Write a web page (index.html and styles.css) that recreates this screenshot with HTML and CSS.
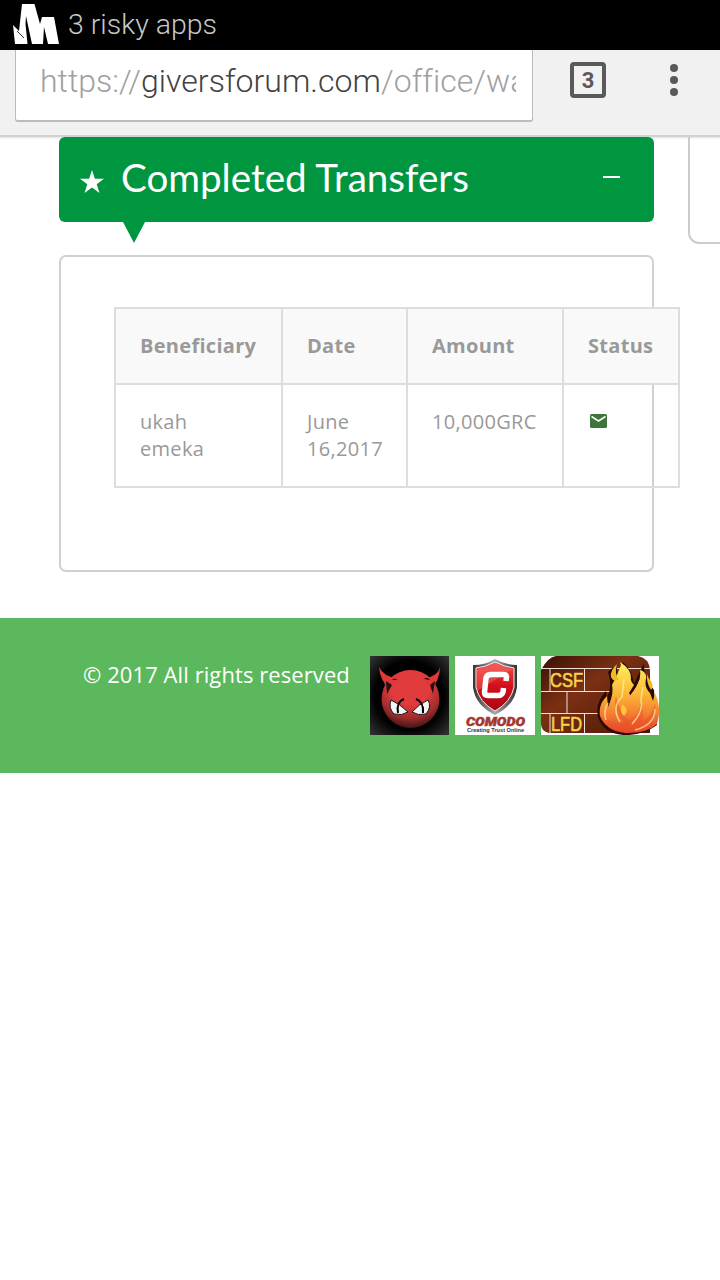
FILE: index.html
```html
<!DOCTYPE html>
<html lang="en">
<head>
<meta charset="utf-8">
<title>Completed Transfers</title>
<link rel="stylesheet" href="styles.css">
</head>
<body>
<div class="status-bar">
  <svg class="status-icon" width="47" height="41" viewBox="0 0 47 41"><path fill="#fff" d="M0 21L6 27 9 0H21.500L27 20 29 13H41L46 40H35L31 23 30 40H19L13 12 12.500 20 14.500 40H2Z"/><path fill="none" stroke="#000" stroke-width=".8" d="M4 27L11 34"/></svg>
  <span class="status-text">3 risky apps</span>
</div>
<header class="toolbar">
  <div class="address"><div class="url">https://<span class="host">giversforum.com</span>/office/wallet</div></div>
  <div class="tabs">3</div>
  <div class="menu"><i></i><i></i><i></i></div>
</header>
<main class="content">
  <div class="column">
    <div class="title-bar">
      <svg class="star" width="24" height="24" viewBox="0 0 24 24"><path fill="#fff" d="M12 0l2.900 8.700H24l-7.300 5.500L19.500 23 12 17.600 4.500 23l2.800-8.800L0 8.700h9.100z"/></svg>
      <h1 class="title">Completed Transfers</h1>
      <span class="collapse"></span>
    </div>
    <div class="pointer"></div>
    <section class="panel">
      <table class="transfers">
        <colgroup><col class="c1"><col class="c2"><col class="c3"><col class="c4"></colgroup>
        <thead><tr><th>Beneficiary</th><th>Date</th><th>Amount</th><th>Status</th></tr></thead>
        <tbody><tr><td>ukah<br>emeka</td><td>June<br>16,2017</td><td>10,000GRC</td><td><svg class="mail" width="17" height="14" viewBox="0 0 17 14"><rect width="17" height="14" rx="1.500" fill="#3c763d"/><path d="M1.500 2.500L8.500 7l7-4.500" fill="none" stroke="#fff" stroke-width="1.600"/></svg></td></tr></tbody>
      </table>
    </section>
  </div>
  <aside class="next-panel"></aside>
</main>
<footer class="footer">
  <span class="copyright">© 2017 All rights reserved</span>
  <div class="badges">
    <svg width="79" height="79" viewBox="0 0 79 79">
      <defs>
        <radialGradient id="dark" r=".72"><stop offset=".6" stop-color="#000"/><stop offset="1" stop-color="#393939"/></radialGradient>
        <radialGradient id="face" cx=".5" cy=".25" r=".77"><stop offset=".45" stop-color="#e23b3c"/><stop offset=".75" stop-color="#a02c2c"/><stop offset="1" stop-color="#391313"/></radialGradient>
      </defs>
      <rect width="79" height="79" fill="url(#dark)"/>
      <path fill="#2b2b2b" d="M13 22L16 38 24 29ZM66 21L64 38 56 29Z"/>
      <circle cx="40.500" cy="43" r="29" fill="url(#face)"/>
      <path fill="#e23738" d="M9 11Q13 20 28 23L21 33Q10 26 9 11ZM70 10Q69 20 53 23L60 33Q70 26 70 10Z"/>
      <path fill="#211" d="M16 25L22 29 17 38ZM65 25L60 29 63 38ZM22 24q3-3 5 0zM54 23q3-3 6 1z"/>
      <path fill="#f4f4f4" stroke="#171313" d="M21 44Q30 48 38 56 32 60 24 58 18 52 21 44ZM58 44Q49 48 42 56 48 60 56 58 62 51 58 44Z"/>
      <path fill="none" stroke="#000" stroke-width="2" d="M34 43Q26 46 28 57M46 43Q54 46 53 57"/>
    </svg>
    <svg width="80" height="79" viewBox="0 0 80 79">
      <defs>
        <linearGradient id="shield" x2="0" y2="1"><stop stop-color="#f24d4c"/><stop offset=".5" stop-color="#d20f18"/><stop offset="1" stop-color="#a70912"/></linearGradient>
        <linearGradient id="steel"><stop stop-color="#333"/><stop offset=".5" stop-color="#aaa"/><stop offset="1" stop-color="#303030"/></linearGradient>
      </defs>
      <rect width="80" height="79" fill="#fff"/>
      <path fill="url(#steel)" d="M40 3Q50 9 62 9V31Q60 49 40 59 20 49 18 31V9Q31 9 40 3Z"/>
      <path fill="url(#shield)" stroke="#eee" stroke-width="1" d="M40 6Q50 11 59 12V31Q56 46 40 55 24 46 21 31V12Q31 11 40 6Z"/>
      <path fill="#fa7770" opacity=".4" d="M22 13Q32 12 40 7 49 12 58 13L22 35Z"/>
      <path fill="none" stroke="#fff" stroke-width="5.500" stroke-linejoin="round" d="M51 25L51.500 21Q51.500 18.500 48 18.500H36Q32 18.500 31 22L29.500 36Q29.500 39.500 33 39.500H43Q47 39.500 48 36L48.500 32"/>
      <text class="comodo" x="11" y="70" textLength="59" lengthAdjust="spacingAndGlyphs">COMODO</text>
      <text class="tagline" x="12" y="75.500" textLength="57" lengthAdjust="spacingAndGlyphs">Creating Trust Online</text>
    </svg>
    <svg width="118" height="79" viewBox="0 0 118 79">
      <defs>
        <linearGradient id="brick" y2="1"><stop stop-color="#3a1005"/><stop offset=".4" stop-color="#7b3013"/><stop offset="1" stop-color="#4b1706"/></linearGradient>
        <linearGradient id="fire" x2="0" y2="1"><stop stop-color="#fff263"/><stop offset=".45" stop-color="#fcb735"/><stop offset=".75" stop-color="#f37a31"/><stop offset="1" stop-color="#df3d25"/></linearGradient>
      </defs>
      <rect width="118" height="79" fill="#fff"/>
      <path fill="url(#brick)" d="M15 0H97Q108 2 109 14V77H8Q0 75 0 68V14Q7 1 15 0Z"/>
      <path fill="none" stroke="#ede1dc" d="M0 12.500H109M0 35.500H84M0 57.500H70M9 12V35M43.500 12V35M26 35V57M9 57V77M43.500 57V77"/>
      <path fill="#2b0903" d="M57 61Q54 47 65 35L66 42Q72 30 67 16 71 12 76 8 75 17 79 22L82 6Q91 14 93 28L103 7Q102 21 113 34L116 69Q101 80 82 79 62 77 57 61Z"/>
      <path fill="url(#fire)" d="M59 60Q57 48 66 40L67 51Q73 38 71 29 76 20 80 9L79 6Q90 13 90 22 89 25 93 29L88 37Q91 40 86 43 94 34 97 27 100 22 99 14 106 16 105 23 103 31 109 37L112 45 114 37Q121 51 116 68 105 78 84 77 65 75 59 60Z"/>
      <path fill="#f1ba21" d="M76 8Q73 19 78 23 73 27 70 21 69 14 76 8ZM106 17Q105 27 110 34 113 31 110 25 106 21 106 17Z"/>
      <path fill="#ec542b" opacity=".55" d="M63 59Q69 74 83 66 71 53 75 40 80 61 89 64 98 60 101 43 101 58 103 65 111 59 114 48 116 64 107 72 86 81 70 71Z"/>
      <path fill="none" stroke="#fff2a5" stroke-width="1.500" opacity=".7" d="M79 66Q70 51 81 41L83 23M91 68Q103 55 100 43L102 31M65 64Q62 55 67 47M94 74Q114 69 114 53"/>
      <path fill="#ffc43a" d="M81 48Q89 53 83 60 78 56 81 48Z"/>
      <text class="brick-text" x="9" y="31" textLength="33" lengthAdjust="spacingAndGlyphs">CSF</text>
      <text class="brick-text" x="10" y="75" textLength="31" lengthAdjust="spacingAndGlyphs">LFD</text>
    </svg>
  </div>
</footer>
</body>
</html>
```
FILE: styles.css
```css
* { box-sizing: border-box; }
body { margin: 0; width: 720px; height: 1280px; overflow: hidden; background: #fff; font-family: "Open Sans", sans-serif; }
.status-bar { display: flex; height: 50px; padding: 4px 0 0 13px; background: #000; }
.status-icon { flex: none; }
.status-text { margin-left: 8px; font: 300 28.500px/42px Roboto, sans-serif; color: #c8c8c8; white-space: nowrap; }
.toolbar { display: flex; height: 87px; padding-left: 15px; background: #f1f1f1; border-bottom: 2px solid #d2d2d2; box-shadow: 0 1px 2px rgba(0,0,0,.12); }
.address { width: 518px; height: 72px; padding: 8px 16px 0 24px; background: #fff; border: solid #bcbcbc; border-width: 0 1px 2px; border-radius: 0 0 3px 3px; }
.url { overflow: hidden; white-space: nowrap; font: 300 32px/46px Roboto, sans-serif; color: #a0a0a0; letter-spacing: .03px; }
.host { color: #424242; }
.tabs { width: 36px; height: 36px; margin: 12px 0 0 37px; border: 4px solid #595959; border-radius: 4px; text-align: center; font: 700 22px/30px Roboto, sans-serif; color: #595959; }
.menu { display: flex; flex-direction: column; gap: 4px; margin: 14px 0 0 64px; }
.menu i { width: 8px; height: 8px; border-radius: 50%; background: #595959; }
.content { display: flex; align-items: flex-start; height: 481px; padding-left: 59px; }
.column { flex: none; width: 595px; }
.title-bar { display: flex; height: 85px; padding: 0 34px 0 22px; background: #009640; border-radius: 6px; }
.star { flex: none; margin: 33px 0 0 -1px; }
.title { margin: 0 0 0 17px; font: 400 38.600px/80px Lato, sans-serif; color: #fff; white-space: nowrap; }
.collapse { width: 17px; height: 2px; margin: 39px 0 0 auto; background: #fff; }
.pointer { width: 22px; height: 21px; margin-left: 64px; background: #009640; clip-path: polygon(0 0, 100% 0, 50% 100%); }
.panel { height: 317px; margin-top: 12px; padding: 50px 0 0 53px; border: 2px solid #d0d0d0; border-radius: 7px; }
.transfers { width: 565px; table-layout: fixed; border-collapse: collapse; font-size: 20px; line-height: 27px; letter-spacing: .3px; color: #999; }
.c1 { width: 167px; }
.c2 { width: 125px; }
.c3 { width: 156px; }
.c4 { width: 116px; }
.transfers th, .transfers td { padding: 23px 0 0 24px; border: 2px solid #ddd; text-align: left; vertical-align: top; white-space: nowrap; }
.transfers th { height: 76px; background: #f9f9f9; }
.transfers td { height: 103px; }
.mail { display: block; margin: 6px 0 0 2px; }
.next-panel { width: 32px; height: 107px; margin-left: 34px; border: solid #ccc; border-width: 0 0 2px 2px; border-bottom-left-radius: 11px; }
.footer { display: flex; height: 155px; padding: 38px 0 0 83px; background: #5cb85c; color: #fff; }
.copyright { width: 287px; font-size: 22px; line-height: 36px; letter-spacing: .08px; white-space: nowrap; }
.badges { display: flex; gap: 6px; }
.badges svg { display: block; }
.comodo { font: italic 900 12px Roboto, sans-serif; fill: #a63730; stroke: #a63730; stroke-width: .5px; }
.tagline { font: 700 5px "Liberation Sans", sans-serif; fill: #333; }
.brick-text { font: 400 20px "Liberation Sans", sans-serif; fill: #f9e44f; stroke: #eec145; stroke-width: .7px; }
```
